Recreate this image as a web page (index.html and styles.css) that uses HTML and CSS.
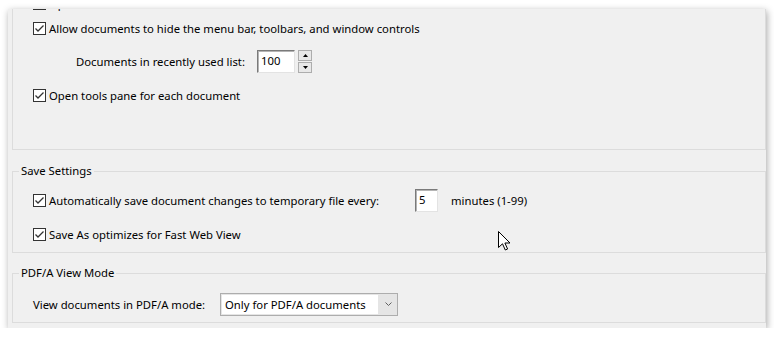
FILE: index.html
```html
<!DOCTYPE html>
<html lang="en">
<head>
<meta charset="utf-8">
<title>Documents preferences</title>
<link rel="stylesheet" href="styles.css">
</head>
<body>
<div class="window">
  <div class="group group-open">
    <div class="row">
      <span class="cb"><svg viewBox="0 0 11 11"><polyline points="1.5,5.5 4,8 9.5,2.5"/></svg></span>
      <span>Open cross-document links in same window</span>
    </div>
    <div class="row mt1">
      <span class="cb"><svg viewBox="0 0 11 11"><polyline points="1.5,5.5 4,8 9.5,2.5"/></svg></span>
      <span>Allow documents to hide the menu bar, toolbars, and window controls</span>
    </div>
    <div class="row mt9">
      <span class="lbl-recent">Documents in recently used list:</span>
      <span class="field field-recent">100</span>
      <span class="spin">
        <span class="spin-btn"><svg viewBox="0 0 5 3"><polygon points="0,3 5,3 2.5,0"/></svg></span>
        <span class="spin-btn"><svg viewBox="0 0 5 3"><polygon points="0,0 5,0 2.5,3"/></svg></span>
      </span>
    </div>
    <div class="row mt10">
      <span class="cb"><svg viewBox="0 0 11 11"><polyline points="1.5,5.5 4,8 9.5,2.5"/></svg></span>
      <span>Open tools pane for each document</span>
    </div>
  </div>

  <fieldset class="group save">
    <legend>Save Settings</legend>
    <div class="row mt9">
      <span class="cb"><svg viewBox="0 0 11 11"><polyline points="1.5,5.5 4,8 9.5,2.5"/></svg></span>
      <span class="lbl-auto">Automatically save document changes to temporary file every:</span>
      <span class="field field-min">5</span>
      <span class="unit">minutes (1-99)</span>
    </div>
    <div class="row mt10">
      <span class="cb"><svg viewBox="0 0 11 11"><polyline points="1.5,5.5 4,8 9.5,2.5"/></svg></span>
      <span>Save As optimizes for Fast Web View</span>
    </div>
  </fieldset>

  <fieldset class="group pdfa">
    <legend>PDF/A View Mode</legend>
    <div class="row mt11">
      <span class="lbl-pdfa">View documents in PDF/A mode:</span>
      <span class="combo">
        <span class="combo-value">Only for PDF/A documents</span>
        <svg class="chev" viewBox="0 0 7 4"><polyline points="0.5,0.5 3.5,3.5 6.5,0.5"/></svg>
      </span>
    </div>
  </fieldset>

  <svg class="cursor" viewBox="0 0 13 20"><path d="M0.5,0.5 L0.5,16.5 L4.5,12.8 L7.3,19 L9.6,18 L6.9,12 L12,12 Z"/></svg>
</div>
</body>
</html>
```

FILE: styles.css
```css
body {
  margin: 0;
  background: #ffffff;
  font-family: "Noto Sans", "Open Sans", sans-serif;
  font-size: 11.3px;
  color: #000000;
}

.window {
  position: relative;
  width: 758px;
  height: 319px;
  margin: 9px 0 0 8px;
  background: #f0f0f0;
  overflow: hidden;
  box-shadow: 1px 2px 7px rgba(0, 0, 0, 0.35);
}

.group {
  margin: 0 0 0 4px;
  border: 1px solid #dcdcdc;
}

.group-open {
  margin-top: -18px;
  border-top: none;
  padding: 0 0 42px 20px;
}

fieldset.group {
  min-width: 0;
  padding: 0 0 6px 6px;
}

fieldset.group legend {
  padding: 0 2px;
  line-height: 16px;
}

fieldset.group .row {
  margin-left: 14px;
}

.save {
  margin-top: 13px;
}

.pdfa {
  margin-top: 12px;
  padding-bottom: 5px;
}

.row {
  display: flex;
  align-items: center;
  height: 24px;
  white-space: nowrap;
}

.mt1 { margin-top: 1px; }
.mt9 { margin-top: 9px; }
.mt10 { margin-top: 10px; }
.mt11 { margin-top: 11px; }

.cb {
  flex: none;
  width: 13px;
  height: 13px;
  box-sizing: border-box;
  border: 1px solid #333333;
  background: #ffffff;
  margin-right: 3px;
  display: flex;
}

.cb svg {
  width: 11px;
  height: 11px;
  fill: none;
  stroke: #333333;
  stroke-width: 1.3;
}

.lbl-recent {
  margin-left: 43px;
  width: 181px;
}

.field {
  box-sizing: border-box;
  height: 23px;
  background: #ffffff;
  border: 1px solid;
  border-color: #7a7a7a #e3e3e3 #e3e3e3 #7a7a7a;
  box-shadow: inset 1px 1px 0 #b4b4b4;
  padding-left: 3px;
  line-height: 19px;
}

.field-recent {
  width: 38px;
}

.field-min {
  width: 23px;
}

.spin {
  margin-left: 3px;
  display: flex;
  flex-direction: column;
  gap: 1px;
}

.spin-btn {
  box-sizing: border-box;
  width: 14px;
  height: 11px;
  border: 1px solid #adadad;
  background: #e8e8e8;
  display: flex;
  align-items: center;
  justify-content: center;
}

.spin-btn svg {
  width: 5px;
  height: 3px;
  fill: #000000;
}

.lbl-auto {
  width: 366px;
}

.unit {
  margin-left: 13px;
}

.lbl-pdfa {
  width: 187px;
}

.combo {
  box-sizing: border-box;
  width: 178px;
  height: 23px;
  border: 1px solid #adadad;
  background: #e5e5e5;
  padding: 1px;
  display: flex;
  align-items: center;
}

.combo-value {
  box-sizing: border-box;
  width: 156px;
  height: 19px;
  line-height: 19px;
  background: #ffffff;
  padding-left: 3px;
}

.chev {
  width: 7px;
  height: 4px;
  margin-left: 7px;
  fill: none;
  stroke: #606060;
  stroke-width: 1;
}

.cursor {
  position: absolute;
  left: 490px;
  top: 222px;
  width: 13px;
  height: 20px;
  fill: #ffffff;
  stroke: #000000;
  stroke-width: 1;
}
```
